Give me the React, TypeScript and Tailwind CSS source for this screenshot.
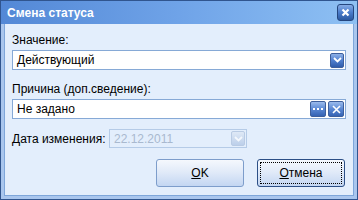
import React from 'react';

const font = { fontFamily: '"Liberation Sans", Arial, sans-serif' };

function DropButton({ disabled }: { disabled?: boolean }) {
  return (
    <div
      className={`w-[14px] h-[15px] rounded-[2px] border flex items-center justify-center ${
        disabled
          ? 'border-[#b9cbe4] bg-gradient-to-b from-[#dfe9f6] to-[#bccfea]'
          : 'border-[#3d5f9c] bg-gradient-to-b from-[#8fb1e6] via-[#4f7fcf] to-[#2f5cab]'
      }`}
    >
      <svg width="9" height="6" viewBox="0 0 9 6">
        <path d="M1 1 L4.5 4.5 L8 1" fill="none" stroke={disabled ? '#f4f8fd' : '#ffffff'} strokeWidth="1.8" />
      </svg>
    </div>
  );
}

function SmallButton({ children }: { children: React.ReactNode }) {
  return (
    <div className="w-[16px] h-[16px] rounded-[2px] border border-[#3d5f9c] bg-gradient-to-b from-[#9bbbec] via-[#5a88d4] to-[#3563b3] flex items-center justify-center">
      {children}
    </div>
  );
}

export default function App() {
  return (
    <div style={font} className="w-[358px] h-[200px] border border-[#30558f] bg-[#a9c6ee] flex flex-col text-[12px] text-black whitespace-nowrap">
      {/* Title bar */}
      <div className="h-[23px] shrink-0 bg-gradient-to-r from-[#5388d6] via-[#6fa3e8] to-[#8ec0f3] flex items-center justify-between pl-[6px] pr-[3px]">
        <span className="text-white font-bold text-[12px]">Смена статуса</span>
        <div className="w-[17px] h-[17px] rounded-[3px] border border-[#24467f] bg-gradient-to-b from-[#86ace6] via-[#4a7ccb] to-[#2a589f] flex items-center justify-center">
          <svg width="9" height="9" viewBox="0 0 9 9">
            <path d="M1.5 1.5 L7.5 7.5 M7.5 1.5 L1.5 7.5" stroke="#ffffff" strokeWidth="2.2" />
          </svg>
        </div>
      </div>

      {/* Body */}
      <div className="flex-1 mx-[3px] mb-[3px] border-x border-b border-[#7ea6da] bg-[#e3eefc] flex flex-col px-[7px] pt-[9px]">
        <div className="leading-[14px] mb-[3px]">Значение:</div>
        <div className="h-[20px] bg-white border border-[#86a9d6] flex items-center justify-between pl-[4px] pr-[1px]">
          <span>Действующий</span>
          <DropButton />
        </div>

        <div className="leading-[14px] mt-[12px] mb-[3px]">Причина (доп.сведение):</div>
        <div className="h-[20px] bg-white border border-[#86a9d6] flex items-center justify-between pl-[4px] pr-[1px]">
          <span>Не задано</span>
          <div className="flex gap-[2px]">
            <SmallButton>
              <svg width="10" height="4" viewBox="0 0 10 4">
                <rect x="0" y="1" width="2" height="2" fill="#fff" />
                <rect x="4" y="1" width="2" height="2" fill="#fff" />
                <rect x="8" y="1" width="2" height="2" fill="#fff" />
              </svg>
            </SmallButton>
            <SmallButton>
              <svg width="9" height="9" viewBox="0 0 9 9">
                <path d="M1 1 L8 8 M8 1 L1 8" stroke="#ffffff" strokeWidth="1.6" />
              </svg>
            </SmallButton>
          </div>
        </div>

        <div className="flex items-center mt-[10px]">
          <span className="w-[97px]">Дата изменения:</span>
          <div className="w-[138px] h-[19px] border border-[#b5cbe7] bg-[#e3eefc] flex items-center justify-between pl-[4px] pr-[1px]">
            <span className="text-[#a9b9cf]">22.12.2011</span>
            <DropButton disabled />
          </div>
        </div>

        <div className="flex justify-end gap-[13px] mt-[11px] pr-[1px]">
          <button className="w-[88px] h-[28px] rounded-[3px] border border-[#7d9dcb] bg-gradient-to-b from-[#f5f8fd] via-[#dfe9f8] to-[#c3d6f2] flex items-center justify-center">
            <span><u>O</u>K</span>
          </button>
          <button className="w-[88px] h-[28px] rounded-[3px] border border-[#2c4f86] bg-gradient-to-b from-[#f5f8fd] via-[#dfe9f8] to-[#c3d6f2] p-[2px] flex">
            <span className="flex-1 border border-dotted border-black flex items-center justify-center">
              <span><u>О</u>тмена</span>
            </span>
          </button>
        </div>
      </div>
    </div>
  );
}
